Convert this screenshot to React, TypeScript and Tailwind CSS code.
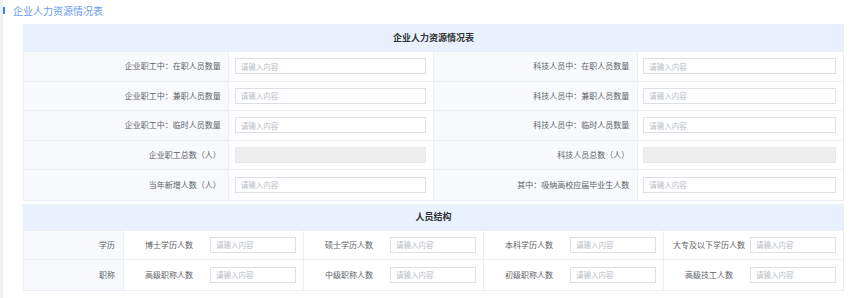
import React from "react";

const font = { fontFamily: '"Noto Sans CJK SC", "Noto Sans", sans-serif' };

function Input({ disabled }: { disabled?: boolean }) {
  return (
    <div
      className={
        "h-[16px] w-full border flex items-center pl-[5px] text-[7.5px] text-[#b8bcc4] " +
        (disabled ? "bg-[#eeeeee] border-[#e4e7ed]" : "bg-white border-[#dcdfe6]")
      }
    >
      {disabled ? "" : "请输入内容"}
    </div>
  );
}

const rows1: [string, string, boolean][] = [
  ["企业职工中：在职人员数量", "科技人员中：在职人员数量", false],
  ["企业职工中：兼职人员数量", "科技人员中：兼职人员数量", false],
  ["企业职工中：临时人员数量", "科技人员中：临时人员数量", false],
  ["企业职工总数（人）", "科技人员总数（人）", true],
  ["当年新增人数（人）", "其中：吸纳高校应届毕业生人数", false],
];

const rows2: [string, string[]][] = [
  ["学历", ["博士学历人数", "硕士学历人数", "本科学历人数", "大专及以下学历人数"]],
  ["职称", ["高级职称人数", "中级职称人数", "初级职称人数", "高级技工人数"]],
];

export default function App() {
  return (
    <div
      className="w-[860px] h-[298px] bg-white border-l-[3px] border-[#eef0f3] text-[#606266] overflow-hidden"
      style={font}
    >
      <div className="flex items-center h-[21px]">
        <div className="w-[2px] h-[7px] bg-[#3b82f0]" />
        <div className="ml-[8px] text-[10px] text-[#6a9cf0] leading-none">企业人力资源情况表</div>
      </div>

      <div className="ml-[20px] w-[821px] mt-[3px] border border-[#ebeef5]">
        <div className="h-[27px] bg-[#e8f1fd] flex items-center justify-center text-[9px] font-bold text-[#303133] border-b border-[#ebeef5]">
          企业人力资源情况表
        </div>
        {rows1.map(([l, r, dis], i) => (
          <div key={i} className="grid grid-cols-4 h-[29.5px] border-b border-[#ebeef5] last:border-b-0 text-[8px]">
            <div className="bg-[#f7f9fd] flex items-center justify-end pr-[7px] border-r border-[#ebeef5]">{l}</div>
            <div className="flex items-center pl-[6px] pr-[7px] border-r border-[#ebeef5]">
              <Input disabled={dis} />
            </div>
            <div className="bg-[#f7f9fd] flex items-center justify-end pr-[8px] border-r border-[#ebeef5]">{r}</div>
            <div className="flex items-center pl-[5px] pr-[7px]">
              <Input disabled={dis} />
            </div>
          </div>
        ))}
      </div>

      <div className="ml-[20px] w-[821px] mt-[3px] border border-[#ebeef5]">
        <div className="h-[26px] bg-[#e8f1fd] flex items-center justify-center text-[9px] font-bold text-[#303133] border-b border-[#ebeef5]">
          人员结构
        </div>
        {rows2.map(([head, items], i) => (
          <div key={i} className="flex h-[29.5px] border-b border-[#ebeef5] last:border-b-0 text-[8px]">
            <div className="w-[100px] bg-[#f7f9fd] flex items-center justify-end pr-[8px] border-r border-[#ebeef5]">
              {head}
            </div>
            {items.map((it, j) => (
              <div
                key={j}
                className={
                  "flex-1 flex items-center pl-[4px] pr-[7px] " + (j < 3 ? "border-r border-[#ebeef5]" : "")
                }
              >
                <div className="w-[82px] shrink-0 text-center whitespace-nowrap">{it}</div>
                <Input />
              </div>
            ))}
          </div>
        ))}
      </div>
    </div>
  );
}
